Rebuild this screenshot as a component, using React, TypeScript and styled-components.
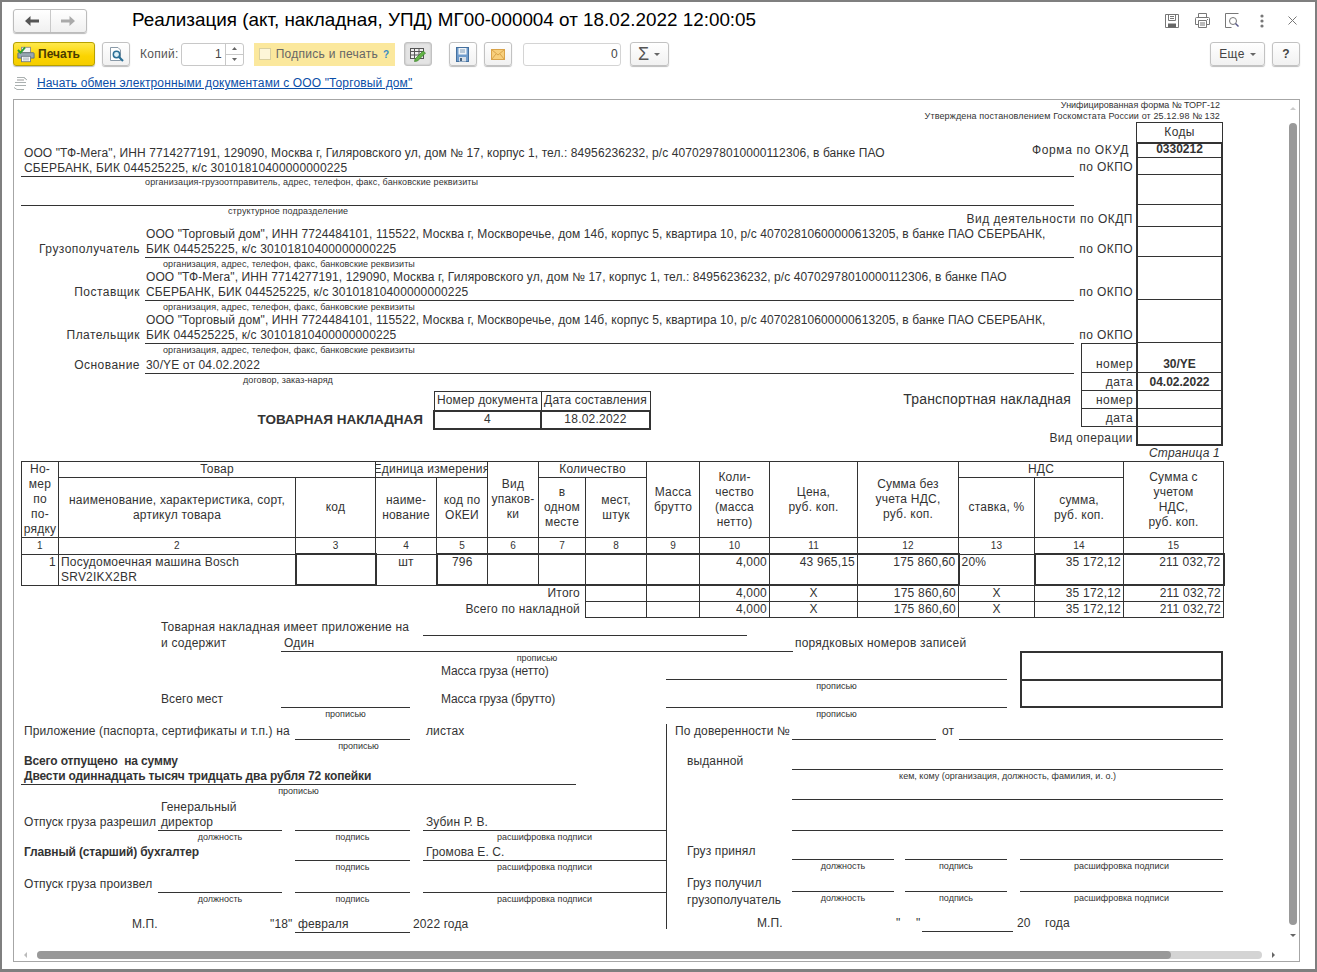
import React from "react";
import styled, { createGlobalStyle, css } from "styled-components";

const Global = createGlobalStyle`
  html, body { margin: 0; padding: 0; background: #fff; overflow: hidden; }
  body { font-family: "Liberation Sans", Arial, sans-serif; color: #333; }
  * { box-sizing: border-box; }
`;

const Window = styled.div`
  width: 1317px; height: 972px;
  border: solid #7f7f7f; border-width: 2px 2px 3px 2px;
  padding: 0 15px 0 11px;
  display: flex; flex-direction: column;
  background: #fff; overflow: hidden;
`;
const TitleBar = styled.div`
  height: 40px; display: flex; align-items: center; flex: none;
  padding-top: 1px;
`;
const NavGroup = styled.div`
  width: 74px; height: 24px; display: flex; border: 1px solid #bcbcbc; border-radius: 3px;
  background: linear-gradient(#fff, #f0f0f0); box-shadow: 0 1px 1px #bbb; margin-top: -4px;
`;
const NavBtn = styled.div<{ $sep?: boolean }>`
  flex: 1; display: flex; align-items: center; justify-content: center;
  ${p => p.$sep && css`border-right: 1px solid #c9c9c9;`}
`;
const Title = styled.h1`
  margin: -5px 0 0 45px; font-size: 18.86px; font-weight: 400; color: #000; white-space: nowrap;
`;
const WinIcons = styled.div`
  margin-left: auto; display: flex; align-items: center; margin-top: -4px; margin-right: -7px;
`;
const WinIcon = styled.div<{ $w: number }>`
  width: ${p => p.$w}px; display: flex; justify-content: center; align-items: center;
`;

const Toolbar = styled.div`
  height: 24px; display: flex; align-items: center; flex: none;
`;
const Btn = styled.div<{ $w: number; $ml?: number; $pressed?: boolean }>`
  width: ${p => p.$w}px; height: 24px; margin-left: ${p => p.$ml ?? 0}px; flex: none;
  border: 1px solid #c2c2c2; border-radius: 3px;
  background: ${p => p.$pressed ? "#e4e4e4" : "linear-gradient(#fff, #f1f1f1)"};
  box-shadow: ${p => p.$pressed ? "inset 0 0 2px #aaa" : "0 1px 1px #bdbdbd"};
  display: flex; align-items: center; justify-content: center; gap: 5px;
  font-size: 12px; letter-spacing: .35px; color: #444;
`;
const PrintBtn = styled.div`
  width: 82px; height: 24px; flex: none; border: 1px solid #b7a100; border-radius: 3px;
  background: linear-gradient(#ffe94d, #fbd400 60%, #f5cd00);
  box-shadow: 0 1px 1px #bbb;
  display: flex; align-items: center; gap: 3px; padding-left: 3px;
  font-size: 12px; font-weight: 700; color: #4a3c00;
`;
const BarLabel = styled.span<{ $ml: number }>`
  margin-left: ${p => p.$ml}px; font-size: 12px; letter-spacing: .3px; color: #555; white-space: nowrap;
`;
const Spinner = styled.div`
  width: 63px; height: 23px; margin-left: 2px; flex: none; border: 1px solid #c8c8c8; border-radius: 3px;
  display: flex; background: #fff;
`;
const SpinValue = styled.div`
  flex: 1; text-align: right; padding-right: 3px; font-size: 12px; line-height: 21px; color: #444;
`;
const SpinArrows = styled.div`
  width: 18px; border-left: 1px solid #c8c8c8; display: flex; flex-direction: column;
  & > div { flex: 1; display: flex; align-items: center; justify-content: center; }
  & > div:first-child { border-bottom: 1px solid #c8c8c8; }
`;
const SignPanel = styled.div`
  width: 141px; height: 23px; margin-left: 10px; flex: none; background: #fbe89d;
  display: flex; align-items: center; padding-left: 5px;
  font-size: 12px; letter-spacing: .27px; color: #666; white-space: nowrap;
`;
const SignCheck = styled.span`
  width: 12px; height: 12px; border: 1px solid #d9cf9e; background: #fdf6d8; margin-right: 5px; flex: none;
`;
const Hint = styled.span`
  margin-left: 5px; color: #3a8cc4; font-weight: 700; font-size: 10px;
`;
const NumberInput = styled.div`
  width: 98px; height: 23px; margin-left: 11px; flex: none; border: 1px solid #d4d4d4; border-radius: 3px;
  text-align: right; padding-right: 2px; font-size: 12px; line-height: 21px; color: #444;
`;
const Sigma = styled.span`font-size: 18px; color: #555; line-height: 18px;`;
const Caret = styled.span`
  width: 0; height: 0; border: 3px solid transparent; border-top: 3px solid #666; border-bottom: 0; flex: none;
`;
const RightBtns = styled.div`margin-left: auto; display: flex;`;

const LinkRow = styled.div`
  height: 18px; margin-top: 8px; display: flex; align-items: center; flex: none; gap: 9px;
`;
const DocLink = styled.a`
  font-size: 12px; letter-spacing: .12px; color: #0a4ea8; text-decoration: underline; white-space: nowrap;
`;

const SheetFrame = styled.div`
  margin-top: 7px; height: 863px; flex: none; border: 1px solid #a6a6a6; position: relative; overflow: hidden;
`;
const ScrollTrackV = styled.div`
  position: absolute; left: 1275px; top: 23px; width: 8px; height: 802px; background: #999; border-radius: 4px;
`;
const ScrollTrackH = styled.div`
  position: absolute; left: 23px; top: 851px; width: 1225px; height: 8px; background: #d4d4d4; border-radius: 4px;
`;
const ScrollThumbH = styled.div`
  width: 1134px; height: 8px; background: #999; border-radius: 4px;
`;
const ScrollArrow = styled.span<{ $x: number; $y: number; $d: "u" | "d" | "l" | "r"; $pale?: boolean }>`
  position: absolute; left: ${p => p.$x}px; top: ${p => p.$y}px; width: 0; height: 0;
  border: 3px solid transparent;
  ${p => p.$d === "u" && css`border-top: 0; border-bottom-color: ${p.$pale ? "#ccc" : "#666"};`}
  ${p => p.$d === "d" && css`border-bottom: 0; border-top-color: ${p.$pale ? "#ccc" : "#666"};`}
  ${p => p.$d === "l" && css`border-left: 0; border-right-color: #bbb;`}
  ${p => p.$d === "r" && css`border-right: 0; border-left-color: #666;`}
`;

const Sheet = styled.div`
  width: 1209px; font-size: 12px; letter-spacing: .22px; line-height: 15px; color: #333;
`;
const FormNote = styled.div<{ $ls: number }>`
  height: 11px; line-height: 11px; font-size: 9px; letter-spacing: ${p => p.$ls}px; text-align: right; padding-right: 3px; white-space: nowrap;
`;
const TopArea = styled.div`display: flex; height: 324px;`;
const TopMain = styled.div`width: 1060px; flex: none;`;
const Codes = styled.div`width: 150px; flex: none; margin-left: -1px;`;
const CodeRow = styled.div<{ $h: number }>`display: flex; height: ${p => p.$h}px;`;
const SideCell = styled.div<{ $box?: boolean; $first?: boolean; $pr?: number; $ls?: number }>`
  width: 63px; flex: none; display: flex; justify-content: flex-end; align-items: flex-end; white-space: nowrap;
  padding-right: ${p => p.$pr ?? 3}px; letter-spacing: ${p => p.$ls ?? .42}px;
  ${p => p.$box && css`
    margin-left: 8px; width: 55px; border-left: 1px solid #333; border-bottom: 1px solid #333;
    ${p.$first && "border-top: 1px solid #333;"}
  `}
`;
const CodeCell = styled.div<{ $kind: "head" | "first" | "body" | "last"; $bold?: boolean }>`
  width: 87px; flex: none; text-align: center; display: flex; align-items: flex-end; justify-content: center;
  font-weight: ${p => p.$bold ? 700 : 400}; letter-spacing: ${p => p.$bold ? "0" : ".32px"};
  ${p => p.$kind === "head" ? css`
    border: 1px solid #333; border-bottom: 0; align-items: center;
  ` : css`
    border-left: 2px solid #333; border-right: 2px solid #333; border-bottom: 1px solid #333;
  `}
  ${p => p.$kind === "first" && "border-top: 2px solid #333;"}
  ${p => p.$kind === "last" && "border-bottom: 2px solid #333;"}
`;

const OrgLines = styled.div`
  margin: 24px 0 0 7px; padding-left: 3px; height: 31px; border-bottom: 1px solid #333; white-space: nowrap; letter-spacing: .16px;
`;
const AddrFirst = styled.span`letter-spacing: .09px;`;
const Cap = styled.div<{ $pl?: number }>`
  font-size: 9px; letter-spacing: .12px; line-height: 11px; height: 11px; white-space: nowrap;
  padding-left: ${p => p.$pl ?? 0}px;
`;
const CapC = styled.div`
  font-size: 9px; letter-spacing: 0; line-height: 12px; text-align: center; white-space: nowrap; align-self: start;
`;
const BlankLine = styled.div`
  margin-left: 7px; height: 18px; border-bottom: 1px solid #333;
`;
const Party = styled.div<{ $mt?: number; $one?: boolean }>`
  display: grid; grid-template-columns: 131px 929px; margin-top: ${p => p.$mt ?? 0}px; align-items: end;
  height: ${p => p.$one ? 16 : 31}px;
`;
const PartyLabel = styled.div`
  text-align: right; padding-right: 5px; padding-bottom: 1px; white-space: nowrap; letter-spacing: .47px;
`;
const PartyText = styled.div`
  padding-left: 1px; border-bottom: 1px solid #333; white-space: nowrap; letter-spacing: .14px;
`;
const PartyCap = styled.div<{ $pl: number }>`
  font-size: 9px; letter-spacing: .08px; line-height: 12px; height: 12px; padding-left: ${p => p.$pl}px; white-space: nowrap;
`;
const DocArea = styled.div`margin-top: 5px; display: flex;`;
const DocTitle = styled.div`
  width: 409px; flex: none; text-align: right; font-size: 13.5px; letter-spacing: 0; font-weight: 700; padding-top: 21px; line-height: 16px; white-space: nowrap;
`;
const DocTable = styled.table`
  width: 216px; margin-left: 10px; border-collapse: collapse; table-layout: fixed; flex: none;
  th { font-weight: 400; border: 1px solid #333; height: 19px; padding: 0; white-space: nowrap; letter-spacing: .15px; }
  td { border: 2px solid #333; height: 18px; padding: 0; text-align: center; }
`;
const Transport = styled.div`
  width: 420px; flex: none; text-align: right; font-size: 14px; letter-spacing: .2px; line-height: 16px; white-space: nowrap;
`;
const PageMark = styled.div`
  height: 15px; text-align: right; padding-right: 3px; font-style: italic; line-height: 15px;
`;

const Goods = styled.table`
  margin-left: 7px; border-collapse: collapse; table-layout: fixed; width: 1202px;
`;
const GH = styled.th<{ $h?: number }>`
  font-weight: 400; border: 1px solid #333; padding: 0; text-align: center; vertical-align: middle;
  line-height: 15px; ${p => p.$h ? `height: ${p.$h}px;` : ""}
`;
const ClipHead = styled.div`
  display: flex; justify-content: center; overflow: hidden; white-space: nowrap;
`;
const GN = styled.td`
  font-size: 10px; letter-spacing: .2px; border: 1px solid #333; height: 16px; padding: 0; text-align: center;
`;
const GD = styled.td<{ $a?: string; $thick?: string }>`
  border: 1px solid #333; padding: 0 2px 0 2px; vertical-align: top; text-align: ${p => p.$a ?? "right"};
  line-height: 15px; height: 31px;
  ${p => (p.$thick ?? "").includes("a") && "border: 2px solid #333;"}
  ${p => (p.$thick ?? "").includes("t") && "border-top: 2px solid #333;"}
  ${p => (p.$thick ?? "").includes("b") && "border-bottom: 2px solid #333;"}
  ${p => (p.$thick ?? "").includes("l") && "border-left: 2px solid #333;"}
  ${p => (p.$thick ?? "").includes("r") && "border-right: 2px solid #333;"}
`;
const GT = styled.td<{ $a?: string }>`
  border: 1px solid #333; padding: 0 2px; text-align: ${p => p.$a ?? "right"}; height: 16px; line-height: 15px;
`;
const GL = styled.td`
  padding: 0 5px 0 0; text-align: right; height: 16px; line-height: 15px; border: none;
`;

const Row = styled.div<{ $cols: string; $h?: number; $mt?: number }>`
  display: grid; grid-template-columns: ${p => p.$cols}; height: ${p => p.$h ?? 16}px; margin-top: ${p => p.$mt ?? 0}px; align-items: end;
`;
const Tx = styled.div<{ $pl?: number; $bold?: boolean; $top?: boolean; $ls?: number }>`
  white-space: pre; padding-left: ${p => p.$pl ?? 0}px; padding-bottom: 1px; line-height: 15px;
  ${p => p.$ls !== undefined && `letter-spacing: ${p.$ls}px;`}
  ${p => p.$bold && "font-weight: 700; letter-spacing: -.14px;"}
  ${p => p.$top && "align-self: start; margin-top: 1px;"}
`;
const Rule = styled.div<{ $bold?: boolean }>`
  height: 16px; line-height: 15px; border-bottom: 1px solid #333; padding-left: 3px; white-space: nowrap;
  ${p => p.$bold && "font-weight: 700; letter-spacing: -.14px;"}
`;
const Spacer = styled.span``;

const MassArea = styled.div`display: flex;`;
const MassRows = styled.div`width: 993px; flex: none;`;
const MassBox = styled.div`
  width: 204px; height: 57px; margin: -1px 0 0 13px; border: 2px solid #333; display: flex; flex-direction: column;
  & > div { flex: 1; }
  & > div:first-child { border-bottom: 2px solid #333; }
`;
const Split = styled.div`display: flex; margin-top: 4px; letter-spacing: .12px;`;
const SplitLeft = styled.div`width: 652px; flex: none;`;
const SplitRight = styled.div`
  width: 557px; flex: none; height: 205px; border-left: 1px solid #333;
`;

const Arrow = ({ dir, c }: { dir: "l" | "r"; c: string }) => (
  <svg width="16" height="12" viewBox="0 0 16 12">
    <path d={dir === "l" ? "M1 6 L6.5 1 V4.5 H15 V7.5 H6.5 V11 Z" : "M15 6 L9.5 1 V4.5 H1 V7.5 H9.5 V11 Z"} fill={c} />
  </svg>
);
const FloppyOutline = () => (
  <svg width="16" height="16" viewBox="0 0 16 16" fill="none" stroke="#777" strokeWidth="1">
    <path d="M1.5 1.5 H14.5 V14.5 H1.5 Z" />
    <path d="M4.5 1.5 V7.5 H11.5 V1.5 M6 3.5 H10 M6 5.5 H10" />
    <path d="M4 10.5 H12 V14.5 H4 Z" fill="#666" stroke="none" />
  </svg>
);
const PrintOutline = () => (
  <svg width="17" height="17" viewBox="0 0 17 17" fill="none" stroke="#777">
    <path d="M4.5 5 V1.5 H12.5 V5" />
    <path d="M2.5 5.5 H14.5 Q15.5 5.5 15.5 6.5 V12.5 H13 M4 12.5 H1.5 V6.5 Q1.5 5.5 2.5 5.5" />
    <path d="M4.5 8.5 H12.5 V15.5 H4.5 Z M6 11 H11 M6 13 H11" />
    <path d="M13 7.5 H14" />
  </svg>
);
const DocSearchOutline = () => (
  <svg width="17" height="17" viewBox="0 0 17 17" fill="none" stroke="#777">
    <path d="M7.5 15.5 H1.5 V1.5 H14.5" />
    <circle cx="9" cy="9" r="3.5" />
    <path d="M11.5 11.5 L14.5 14.5" stroke="#558" strokeWidth="1.4" />
  </svg>
);
const Dots = () => (
  <svg width="4" height="14" viewBox="0 0 4 14" fill="#777">
    <circle cx="2" cy="2" r="1.6" /><circle cx="2" cy="7" r="1.6" /><circle cx="2" cy="12" r="1.6" />
  </svg>
);
const CloseX = () => (
  <svg width="9" height="9" viewBox="0 0 9 9" stroke="#777" fill="none"><path d="M.5 .5 L8.5 8.5 M8.5 .5 L.5 8.5" /></svg>
);
const PrintColor = () => (
  <svg width="18" height="17" viewBox="0 0 20 18">
    <rect x="5" y="1" width="10" height="6" fill="#f4f4f4" stroke="#8c8c8c" />
    <path d="M2 7 H18 Q19 7 19 8 V13 H1 V8 Q1 7 2 7Z" fill="#97a7b2" stroke="#5f6f7a" />
    <rect x="5" y="11" width="10" height="6" fill="#fff" stroke="#6c7a84" />
    <path d="M6.5 13 H13.5 M6.5 15 H13.5" stroke="#98a6b0" />
    <path d="M1 4 L4 7 L9 1" stroke="#2fa12f" strokeWidth="2" fill="none" />
  </svg>
);
const DocMagnifier = () => (
  <svg width="17" height="17" viewBox="0 0 17 17" fill="none">
    <path d="M2.5 1.5 H10 L12.5 4 V14.5 H2.5 Z" fill="#fff" stroke="#8a9aa8" />
    <circle cx="8.5" cy="8.5" r="3.2" fill="#dff0f7" stroke="#2b6f96" strokeWidth="1.5" />
    <path d="M11 11 L15 15" stroke="#2b6f96" strokeWidth="2.2" />
  </svg>
);
const TableEdit = () => (
  <svg width="18" height="16" viewBox="0 0 18 16" fill="none">
    <rect x="1.5" y="2.5" width="13" height="10" fill="#efefef" stroke="#555" />
    <path d="M1.5 5.5 H14.5 M1.5 9 H14.5 M5.5 2.5 V12.5 M10 2.5 V12.5" stroke="#555" />
    <path d="M6 13 L14 5 L16.5 7 L8.5 15 L5.5 15.5 Z" fill="#62b345" stroke="#3c7f2c" strokeWidth=".7" />
  </svg>
);
const FloppyBlue = () => (
  <svg width="13" height="15" viewBox="0 0 13 15">
    <rect x=".5" y=".5" width="12" height="14" fill="#6f9ccc" stroke="#44709f" />
    <rect x="2.5" y="1" width="8" height="6.5" fill="#f0f4f8" />
    <path d="M4 3 H9 M4 5 H9" stroke="#7f9cb8" />
    <rect x="3" y="10" width="7" height="4.5" fill="#d8e0e8" />
    <rect x="4" y="11" width="2" height="3" fill="#46627f" />
  </svg>
);
const MailIcon = () => (
  <svg width="14" height="11" viewBox="0 0 14 11">
    <rect x=".5" y=".5" width="13" height="10" fill="#f7cf7c" stroke="#d9a34a" />
    <path d="M.5 .5 L7 6 L13.5 .5 M.5 10.5 L5 5 M13.5 10.5 L9 5" stroke="#d9a34a" fill="none" />
  </svg>
);
const ExchangeIcon = () => (
  <svg width="15" height="15" viewBox="0 0 15 15" fill="none" stroke="#aab0b0">
    <path d="M4 1.5 H11 L14 4 M2 6.5 H13 M2 9.5 H13 M4 13.5 H11 M1 11.5 L4 13.5 M11 1.5 L13 3" />
    <path d="M4 4 H11" stroke="#999" />
  </svg>
);
const Tri = ({ up }: { up?: boolean }) => (
  <svg width="5" height="3" viewBox="0 0 5 3"><path d={up ? "M0 3 L2.5 0 L5 3Z" : "M0 0 L2.5 3 L5 0Z"} fill="#666" /></svg>
);

const cols = [37, 237, 80, 61, 51, 51, 47, 61, 53, 70, 88, 101, 76, 89, 100];

const codeRows: Array<{ h: number; side?: string; box?: boolean; first?: boolean; pr?: number; ls?: number; code?: string; kind: "head" | "first" | "body" | "last"; bold?: boolean }> = [
  { h: 20, code: "Коды", kind: "head" },
  { h: 16, side: "Форма по ОКУД", pr: 7, ls: .62, code: "0330212", kind: "first", bold: true },
  { h: 17, side: "по ОКПО", kind: "body" },
  { h: 30, kind: "body" },
  { h: 22, side: "Вид деятельности по ОКДП", ls: .5, kind: "body" },
  { h: 30, side: "по ОКПО", kind: "body" },
  { h: 43, side: "по ОКПО", kind: "body" },
  { h: 43, side: "по ОКПО", kind: "body" },
  { h: 30, side: "номер", box: true, first: true, code: "30/YE", kind: "body", bold: true },
  { h: 18, side: "дата", box: true, code: "04.02.2022", kind: "body", bold: true },
  { h: 18, side: "номер", box: true, kind: "body" },
  { h: 18, side: "дата", box: true, kind: "body" },
  { h: 19, side: "Вид операции", kind: "last" },
];

const parties = [
  { label: "Грузополучатель", a: "ООО \"Торговый дом\", ИНН 7724484101, 115522, Москва г, Москворечье, дом 14б, корпус 5, квартира 10, р/с 40702810600000613205, в банке ПАО СБЕРБАНК,", b: "БИК 044525225, к/с 30101810400000000225" },
  { label: "Поставщик", a: "ООО \"ТФ-Мега\", ИНН 7714277191, 129090, Москва г, Гиляровского ул, дом № 17, корпус 1, тел.: 84956236232, р/с 40702978010000112306, в банке ПАО", b: "СБЕРБАНК, БИК 044525225, к/с 30101810400000000225" },
  { label: "Плательщик", a: "ООО \"Торговый дом\", ИНН 7724484101, 115522, Москва г, Москворечье, дом 14б, корпус 5, квартира 10, р/с 40702810600000613205, в банке ПАО СБЕРБАНК,", b: "БИК 044525225, к/с 30101810400000000225" },
];
const partyCap = "организация, адрес, телефон, факс, банковские реквизиты";

const TotalRow = ({ label }: { label: string }) => (
  <tr>
    <GL colSpan={7}>{label}</GL>
    <GT /><GT />
    <GT>4,000</GT>
    <GT $a="center">Х</GT>
    <GT>175 860,60</GT>
    <GT $a="center">Х</GT>
    <GT>35 172,12</GT>
    <GT>211 032,72</GT>
  </tr>
);

export default function App() {
  return (
    <Window>
      <Global />
      <TitleBar>
        <NavGroup>
          <NavBtn $sep><Arrow dir="l" c="#555" /></NavBtn>
          <NavBtn><Arrow dir="r" c="#aaa" /></NavBtn>
        </NavGroup>
        <Title>Реализация (акт, накладная, УПД) МГ00-000004 от 18.02.2022 12:00:05</Title>
        <WinIcons>
          <WinIcon $w={30}><FloppyOutline /></WinIcon>
          <WinIcon $w={30}><PrintOutline /></WinIcon>
          <WinIcon $w={30}><DocSearchOutline /></WinIcon>
          <WinIcon $w={30}><Dots /></WinIcon>
          <WinIcon $w={30}><CloseX /></WinIcon>
        </WinIcons>
      </TitleBar>
      <Toolbar>
        <PrintBtn><PrintColor />Печать</PrintBtn>
        <Btn $w={28} $ml={7}><DocMagnifier /></Btn>
        <BarLabel $ml={10}>Копий:</BarLabel>
        <Spinner>
          <SpinValue>1</SpinValue>
          <SpinArrows><div><Tri up /></div><div><Tri /></div></SpinArrows>
        </Spinner>
        <SignPanel><SignCheck />Подпись и печать<Hint>?</Hint></SignPanel>
        <Btn $w={28} $ml={9} $pressed><TableEdit /></Btn>
        <Btn $w={28} $ml={17}><FloppyBlue /></Btn>
        <Btn $w={28} $ml={7}><MailIcon /></Btn>
        <NumberInput>0</NumberInput>
        <Btn $w={39} $ml={9}><Sigma>Σ</Sigma><Caret /></Btn>
        <RightBtns>
          <Btn $w={55}>Еще<Caret /></Btn>
          <Btn $w={28} $ml={7}><b>?</b></Btn>
        </RightBtns>
      </Toolbar>
      <LinkRow>
        <ExchangeIcon />
        <DocLink>Начать обмен электронными документами с ООО "Торговый дом"</DocLink>
      </LinkRow>
      <SheetFrame>
        <Sheet>
          <FormNote $ls={0}>Унифицированная форма № ТОРГ-12</FormNote>
          <FormNote $ls={.13}>Утверждена постановлением Госкомстата России от 25.12.98 № 132</FormNote>
          <TopArea>
            <TopMain>
              <OrgLines>
                <AddrFirst>ООО "ТФ-Мега", ИНН 7714277191, 129090, Москва г, Гиляровского ул, дом № 17, корпус 1, тел.: 84956236232, р/с 40702978010000112306, в банке ПАО</AddrFirst><br />
                СБЕРБАНК, БИК 044525225, к/с 30101810400000000225
              </OrgLines>
              <Cap $pl={131}>организация-грузоотправитель, адрес, телефон, факс, банковские реквизиты</Cap>
              <BlankLine />
              <Cap $pl={214}>структурное подразделение</Cap>
              {parties.map((p, i) => (
                <React.Fragment key={p.label}>
                  <Party $mt={i === 0 ? 10 : 0}>
                    <PartyLabel>{p.label}</PartyLabel>
                    <PartyText><AddrFirst>{p.a}</AddrFirst><br />{p.b}</PartyText>
                  </Party>
                  <PartyCap $pl={149}>{partyCap}</PartyCap>
                </React.Fragment>
              ))}
              <Party $one $mt={2}>
                <PartyLabel>Основание</PartyLabel>
                <PartyText>30/YE от 04.02.2022</PartyText>
              </Party>
              <PartyCap $pl={229}>договор, заказ-наряд</PartyCap>
              <DocArea>
                <DocTitle>ТОВАРНАЯ НАКЛАДНАЯ</DocTitle>
                <DocTable>
                  <colgroup><col width="107" /><col width="109" /></colgroup>
                  <thead><tr><th>Номер документа</th><th>Дата составления</th></tr></thead>
                  <tbody><tr><td>4</td><td>18.02.2022</td></tr></tbody>
                </DocTable>
                <Transport>Транспортная накладная</Transport>
              </DocArea>
            </TopMain>
            <Codes>
              {codeRows.map((r, i) => (
                <CodeRow $h={r.h} key={i}>
                  <SideCell $box={r.box} $first={r.first} $pr={r.pr} $ls={r.ls}>{r.side}</SideCell>
                  <CodeCell $kind={r.kind} $bold={r.bold}>{r.code}</CodeCell>
                </CodeRow>
              ))}
            </Codes>
          </TopArea>
          <PageMark>Страница 1</PageMark>
          <Goods>
            <colgroup>{cols.map((w, i) => <col key={i} width={w} />)}</colgroup>
            <thead>
              <tr>
                <GH rowSpan={2}>Но-<br />мер<br />по<br />по-<br />рядку</GH>
                <GH colSpan={2} $h={16}>Товар</GH>
                <GH colSpan={2}><ClipHead>Единица измерения</ClipHead></GH>
                <GH rowSpan={2}>Вид<br />упаков-<br />ки</GH>
                <GH colSpan={2}>Количество</GH>
                <GH rowSpan={2}>Масса<br />брутто</GH>
                <GH rowSpan={2}>Коли-<br />чество<br />(масса<br />нетто)</GH>
                <GH rowSpan={2}>Цена,<br />руб. коп.</GH>
                <GH rowSpan={2}>Сумма без<br />учета НДС,<br />руб. коп.</GH>
                <GH colSpan={2}>НДС</GH>
                <GH rowSpan={2}>Сумма с<br />учетом<br />НДС,<br />руб. коп.</GH>
              </tr>
              <tr>
                <GH $h={60}>наименование, характеристика, сорт,<br />артикул товара</GH>
                <GH>код</GH>
                <GH>наиме-<br />нование</GH>
                <GH>код по<br />ОКЕИ</GH>
                <GH>в<br />одном<br />месте</GH>
                <GH>мест,<br />штук</GH>
                <GH>ставка, %</GH>
                <GH>сумма,<br />руб. коп.</GH>
              </tr>
              <tr>{cols.map((_, i) => <GN key={i}>{i + 1}</GN>)}</tr>
            </thead>
            <tbody>
              <tr>
                <GD>1</GD>
                <GD $a="left">Посудомоечная машина Bosch<br />SRV2IKX2BR</GD>
                <GD $thick="a" />
                <GD $a="center">шт</GD>
                <GD $a="center" $thick="tbl">796</GD>
                <GD $thick="tb" /><GD $thick="tb" /><GD $thick="tb" /><GD $thick="tb" />
                <GD $thick="tb">4,000</GD>
                <GD $thick="tb">43 965,15</GD>
                <GD $thick="tbr">175 860,60</GD>
                <GD $a="left">20%</GD>
                <GD $thick="tbl">35 172,12</GD>
                <GD $thick="tbr">211 032,72</GD>
              </tr>
              <TotalRow label="Итого" />
              <TotalRow label="Всего по накладной" />
            </tbody>
          </Goods>

          <Row $cols="147px 262px 324px" $mt={2}>
            <Spacer /><Tx>Товарная накладная имеет приложение на</Tx><Rule />
          </Row>
          <Row $cols="147px 120px 512px auto">
            <Spacer /><Tx>и содержит</Tx><Rule>Один</Rule><Tx $pl={2}>порядковых номеров записей</Tx>
          </Row>
          <MassArea>
            <MassRows>
              <Row $cols="267px 512px" $h={12}><Spacer /><CapC>прописью</CapC></Row>
              <Row $cols="427px 225px 341px">
                <Spacer /><Tx $ls={-.1}>Масса груза (нетто)</Tx><Rule />
              </Row>
              <Row $cols="652px 341px" $h={12}><Spacer /><CapC>прописью</CapC></Row>
              <Row $cols="147px 120px 129px 31px 225px 341px">
                <Spacer /><Tx $ls={.1}>Всего мест</Tx><Rule /><Spacer /><Tx $ls={-.1}>Масса груза (брутто)</Tx><Rule />
              </Row>
              <Row $cols="267px 129px 256px 341px" $h={12}>
                <Spacer /><CapC>прописью</CapC><Spacer /><CapC>прописью</CapC>
              </Row>
            </MassRows>
            <MassBox><div /><div /></MassBox>
          </MassArea>

          <Split>
            <SplitLeft>
              <Row $cols="10px 271px 115px 16px auto">
                <Spacer /><Tx>Приложение (паспорта, сертификаты и т.п.) на</Tx><Rule /><Spacer /><Tx>листах</Tx>
              </Row>
              <Row $cols="287px 115px" $h={12}><Spacer /><CapC>прописью</CapC></Row>
              <Row $cols="10px auto" $h={15} $mt={2}><Spacer /><Tx $bold>Всего отпущено  на сумму</Tx></Row>
              <Row $cols="7px 555px"><Spacer /><Rule $bold>Двести одиннадцать тысяч тридцать два рубля 72 копейки</Rule></Row>
              <Row $cols="7px 555px" $h={12}><Spacer /><CapC>прописью</CapC></Row>
              <Row $cols="147px auto" $h={15} $mt={3}><Spacer /><Tx>Генеральный</Tx></Row>
              <Row $cols="10px 134px 124px 13px 115px 13px 243px">
                <Spacer /><Tx>Отпуск груза разрешил</Tx><Rule>директор</Rule><Spacer /><Rule /><Spacer /><Rule>Зубин Р. В.</Rule>
              </Row>
              <Row $cols="144px 124px 13px 115px 13px 243px" $h={12}>
                <Spacer /><CapC>должность</CapC><Spacer /><CapC>подпись</CapC><Spacer /><CapC>расшифровка подписи</CapC>
              </Row>
              <Row $cols="10px 271px 115px 13px 243px" $mt={2}>
                <Spacer /><Tx $bold>Главный (старший) бухгалтер</Tx><Rule /><Spacer /><Rule>Громова Е. С.</Rule>
              </Row>
              <Row $cols="281px 115px 13px 243px" $h={12}>
                <Spacer /><CapC>подпись</CapC><Spacer /><CapC>расшифровка подписи</CapC>
              </Row>
              <Row $cols="10px 134px 124px 13px 115px 13px 243px" $mt={4}>
                <Spacer /><Tx>Отпуск груза произвел</Tx><Rule /><Spacer /><Rule /><Spacer /><Rule />
              </Row>
              <Row $cols="144px 124px 13px 115px 13px 243px" $h={12}>
                <Spacer /><CapC>должность</CapC><Spacer /><CapC>подпись</CapC><Spacer /><CapC>расшифровка подписи</CapC>
              </Row>
              <Row $cols="118px 138px 25px 115px auto" $mt={12}>
                <Spacer /><Tx>М.П.</Tx><Tx>"18"</Tx><Rule>февраля</Rule><Tx $pl={3}>2022 года</Tx>
              </Row>
            </SplitLeft>
            <SplitRight>
              <Row $cols="125px 144px 23px 264px">
                <Tx $pl={8}>По доверенности №</Tx><Rule /><Tx $pl={6}>от</Tx><Rule />
              </Row>
              <Row $cols="125px 431px" $mt={14}>
                <Tx $pl={20}>выданной</Tx><Rule />
              </Row>
              <Row $cols="125px 431px" $h={12}><Spacer /><CapC>кем, кому (организация, должность, фамилия, и. о.)</CapC></Row>
              <Row $cols="125px 431px" $mt={2}><Spacer /><Rule /></Row>
              <Row $cols="125px 431px" $mt={15}><Spacer /><Rule /></Row>
              <Row $cols="125px 102px 11px 102px 13px 203px" $mt={13}>
                <Tx $pl={20}>Груз принял</Tx><Rule /><Spacer /><Rule /><Spacer /><Rule />
              </Row>
              <Row $cols="125px 102px 11px 102px 13px 203px" $h={12}>
                <Spacer /><CapC>должность</CapC><Spacer /><CapC>подпись</CapC><Spacer /><CapC>расшифровка подписи</CapC>
              </Row>
              <Row $cols="125px 102px 11px 102px 13px 203px" $mt={4}>
                <Tx $pl={20}>Груз получил</Tx><Rule /><Spacer /><Rule /><Spacer /><Rule />
              </Row>
              <Row $cols="125px 102px 11px 102px 13px 203px" $h={16}>
                <Tx $pl={20} $top>грузополучатель</Tx><CapC>должность</CapC><Spacer /><CapC>подпись</CapC><Spacer /><CapC>расшифровка подписи</CapC>
              </Row>
              <Row $cols="90px 139px 20px 6px 91px 32px auto" $mt={8}>
                <Spacer /><Tx>М.П.</Tx><Tx>"</Tx><Tx>"</Tx><Rule /><Tx $pl={4}>20</Tx><Tx>года</Tx>
              </Row>
            </SplitRight>
          </Split>
        </Sheet>
        <ScrollArrow $x={1276} $y={7} $d="u" $pale />
        <ScrollTrackV />
        <ScrollArrow $x={1276} $y={834} $d="d" />
        <ScrollArrow $x={10} $y={852} $d="l" />
        <ScrollTrackH><ScrollThumbH /></ScrollTrackH>
        <ScrollArrow $x={1258} $y={852} $d="r" />
      </SheetFrame>
    </Window>
  );
}
